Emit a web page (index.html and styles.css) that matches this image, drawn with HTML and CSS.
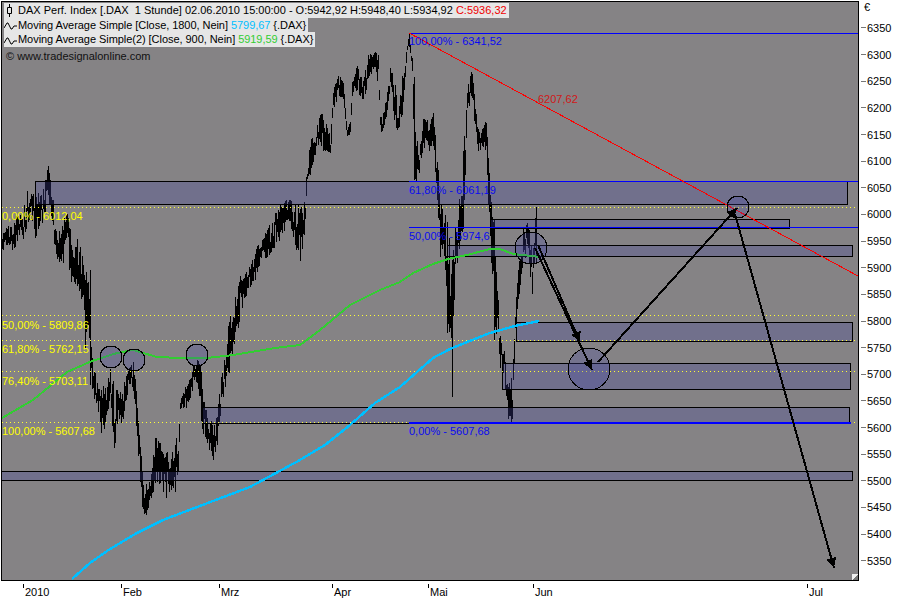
FILE: index.html
```html
<!DOCTYPE html>
<html lang="en">
<head>
    <meta charset="UTF-8">
    <meta name="viewport" content="width=device-width, initial-scale=1.0">
    <title>DAX Perf. Index</title>
    <link rel="stylesheet" href="styles.css">
</head>
<body>
    <div class="chart-window">
        <div class="chart-row">
            <div class="plot">
                <!-- viewBox uses page pixels so drawings can be read straight off the chart -->
                <svg class="canvas" viewBox="2 2 856 578" width="856" height="578">
                    <defs>
                        <marker id="arrowHead" markerUnits="userSpaceOnUse" markerWidth="12" markerHeight="12" refX="10" refY="5" orient="auto">
                            <polygon points="0,0 10,5 0,10" fill="#000"></polygon>
                        </marker>
                    </defs>

                    <path id="priceBars" class="price"></path>

                    <!-- support / resistance zones -->
                    <rect class="zone" x="35.5" y="181.5" width="812" height="23"></rect>
                    <rect class="zone" x="490.5" y="219.5" width="299" height="9"></rect>
                    <rect class="zone" x="447.5" y="245.5" width="405" height="11"></rect>
                    <rect class="zone" x="516.5" y="322.5" width="336" height="19"></rect>
                    <rect class="zone" x="502.5" y="363.5" width="348" height="26"></rect>
                    <rect class="zone" x="202.5" y="407.5" width="647" height="16"></rect>
                    <rect class="zone" x="1.5" y="471.5" width="851" height="9"></rect>

                    <!-- fibonacci retracement, yellow set -->
                    <line class="fib-dots" x1="2" y1="207.5" x2="858" y2="207.5"></line>
                    <line class="fib-dots" x1="2" y1="315.5" x2="858" y2="315.5"></line>
                    <line class="fib-dots" x1="2" y1="340.5" x2="858" y2="340.5"></line>
                    <line class="fib-dots" x1="2" y1="371.5" x2="858" y2="371.5"></line>
                    <line class="fib-dots" x1="2" y1="422.5" x2="858" y2="422.5"></line>

                    <!-- fibonacci retracement, blue set -->
                    <line class="fib-line" x1="409" y1="33.5" x2="858" y2="33.5"></line>
                    <line class="fib-line" x1="409" y1="181.5" x2="858" y2="181.5"></line>
                    <line class="fib-line" x1="409" y1="227.5" x2="858" y2="227.5"></line>
                    <line class="fib-line fib-base" x1="409" y1="423" x2="851" y2="423"></line>

                    <line class="trend" x1="409" y1="33" x2="858" y2="276"></line>

                    <polyline class="ma ma-slow" points="72,579 90,563 110,549 137,533 163,520 213,501 250,487 300,460 325,445 350,425 375,403 400,387 417,372 433,358 450,349 467,342 490,333 515,326 539,321"></polyline>
                    <polyline class="ma ma-fast" points="2,418 33,400 50,386 67,372 92,361 117,353 133,350 157,357 180,358 207,358 233,355 275,348 300,345 320,330 350,305 380,290 400,282 413,273 433,264 448,259 467,255 490,249 500,249 513,254 540,257"></polyline>

                    <circle class="mark" cx="111" cy="357" r="11"></circle>
                    <circle class="mark" cx="134" cy="360" r="11"></circle>
                    <circle class="mark" cx="197" cy="355" r="11"></circle>
                    <circle class="mark" cx="531" cy="248" r="16"></circle>
                    <circle class="mark" cx="589" cy="369" r="21"></circle>
                    <circle class="mark" cx="738" cy="207" r="11"></circle>

                    <line class="arrow" x1="538" y1="245" x2="580" y2="342"></line>
                    <line class="arrow" x1="535" y1="248" x2="592" y2="370"></line>
                    <line class="arrow" x1="598" y1="362" x2="737" y2="208"></line>
                    <line class="arrow" x1="735" y1="214" x2="834" y2="568"></line>

                    <text class="label label-blue" x="409" y="45">100,00% - 6341,52</text>
                    <text class="label label-blue" x="409" y="194">61,80% - 6061,19</text>
                    <text class="label label-blue" x="409" y="240">50,00% - 5974,6</text>
                    <text class="label label-blue" x="409" y="435">0,00% - 5607,68</text>
                    <text class="label label-yellow" x="2" y="220">0,00% - 6012,04</text>
                    <text class="label label-yellow" x="2" y="329">50,00% - 5809,86</text>
                    <text class="label label-yellow" x="2" y="353">61,80% - 5762,15</text>
                    <text class="label label-yellow" x="2" y="385">76,40% - 5703,11</text>
                    <text class="label label-yellow" x="2" y="435">100,00% - 5607,68</text>
                    <text class="label label-red" x="538" y="103">6207,62</text>

                    <!-- resize grip -->
                    <polygon class="grip" points="852,580 858,574 858,580"></polygon>
                    <polygon class="grip-back" points="852,574 858,574 852,580"></polygon>
                </svg>

                <div class="legend">
                    <div class="legend-row">
                        <svg class="legend-icon" viewBox="0 0 13 13" width="13" height="13">
                            <path d="M5.5 0v3M5.5 10v3M3.5 3.5h4v6h-4z" fill="none" stroke="#000"></path>
                        </svg>
                        <span>DAX Perf. Index [.DAX&nbsp; 1 Stunde] 02.06.2010 15:00:00 - O:5942,92 H:5948,40 L:5934,92 <em class="val-red">C:5936,32</em></span>
                    </div>
                    <div class="legend-row legend-ma">
                        <svg class="legend-icon" viewBox="0 0 13 13" width="13" height="13">
                            <path d="M0 10 3 5h1l3 6h1l2-3h3" fill="none" stroke="#000"></path>
                        </svg>
                        <span>Moving Average Simple [Close, 1800, Nein] <em class="val-cyan">5799,67</em> {.DAX}</span>
                    </div>
                    <div class="legend-row legend-ma">
                        <svg class="legend-icon" viewBox="0 0 13 13" width="13" height="13">
                            <path d="M0 10 3 5h1l3 6h1l2-3h3" fill="none" stroke="#000"></path>
                        </svg>
                        <span>Moving Average Simple(2) [Close, 900, Nein] <em class="val-green">5919,59</em> {.DAX}</span>
                    </div>
                    <div class="legend-source">© www.tradesignalonline.com</div>
                </div>
            </div>

            <div class="price-axis">
                <div class="currency">€</div>
                <div class="price-tick">6350</div>
                <div class="price-tick">6300</div>
                <div class="price-tick">6250</div>
                <div class="price-tick">6200</div>
                <div class="price-tick">6150</div>
                <div class="price-tick">6100</div>
                <div class="price-tick">6050</div>
                <div class="price-tick">6000</div>
                <div class="price-tick">5950</div>
                <div class="price-tick">5900</div>
                <div class="price-tick">5850</div>
                <div class="price-tick">5800</div>
                <div class="price-tick">5750</div>
                <div class="price-tick">5700</div>
                <div class="price-tick">5650</div>
                <div class="price-tick">5600</div>
                <div class="price-tick">5550</div>
                <div class="price-tick">5500</div>
                <div class="price-tick">5450</div>
                <div class="price-tick">5400</div>
                <div class="price-tick">5350</div>
            </div>
        </div>

        <div class="time-axis">
            <div class="month" style="width: 98px">2010</div>
            <div class="month" style="width: 98px">Feb</div>
            <div class="month" style="width: 113px">Mrz</div>
            <div class="month" style="width: 96px">Apr</div>
            <div class="month" style="width: 105px">Mai</div>
            <div class="month" style="width: 274px">Jun</div>
            <div class="month" style="width: 40px">Jul</div>
        </div>
    </div>

    <script src="chart.js"></script>
</body>
</html>
```

FILE: styles.css
```css
body {
    margin: 0;
    background: #fff;
    color: #000;
    font-family: 'Liberation Sans', Arial, sans-serif;
    font-size: 11px;
    overflow: hidden;
}

.chart-window {
    width: 900px;
    height: 600px;
    padding: 1px 0 0 1px;
    box-sizing: border-box;
}

.chart-row {
    display: flex;
}

.plot {
    position: relative;
    width: 858px;
    height: 580px;
    box-sizing: border-box;
    border: 1px solid #000;
    background: #858385;
}

.canvas {
    display: block;
    shape-rendering: crispEdges;
}

.price {
    fill: none;
    stroke: #000;
    stroke-width: 1;
}

.zone {
    fill: rgba(70, 70, 160, 0.3);
    stroke: #000;
    stroke-width: 1;
}

.fib-dots {
    stroke: #ffff33;
    stroke-width: 1;
    stroke-dasharray: 1 3;
    shape-rendering: geometricPrecision;
}

.fib-line {
    stroke: #00f;
    stroke-width: 1;
}

.fib-base {
    stroke-width: 2;
}

.trend {
    stroke: #f00;
    stroke-width: 1;
}

.ma {
    fill: none;
}

.ma-slow {
    stroke: #00bfff;
    stroke-width: 2.4;
}

.ma-fast {
    stroke: #32cd32;
    stroke-width: 2;
}

.mark {
    fill: rgba(70, 70, 170, 0.26);
    stroke: #000;
    stroke-width: 1;
}

.arrow {
    stroke: #000;
    stroke-width: 2;
    marker-end: url(#arrowHead);
}

.label {
    font-size: 11px;
    shape-rendering: auto;
}

.label-blue {
    fill: #0a0af0;
}

.label-yellow {
    fill: #ffff00;
}

.label-red {
    fill: #d01818;
}

.grip {
    fill: #777;
}

.grip-back {
    fill: #eee;
}

/* legend sits on top of the plot */
.legend {
    position: absolute;
    top: 1px;
    left: 2px;
}

.legend-row {
    display: flex;
    align-items: center;
    width: max-content;
    height: 14.5px;
    padding-right: 2px;
    background: #e6e6e6;
    white-space: nowrap;
}

.legend-ma {
    letter-spacing: -0.05px;
}

.legend-icon {
    flex: none;
    margin-right: 1px;
}

.legend-row em {
    font-style: normal;
}

.val-red {
    color: #f00000;
}

.val-cyan {
    color: #00bfff;
}

.val-green {
    color: #32cd32;
}

.legend-source {
    margin-top: 3px;
    margin-left: 2px;
    color: #111;
}

.price-axis {
    width: 41px;
}

.currency {
    height: 13.65px;
    padding-left: 5px;
    line-height: 13px;
}

.price-tick {
    display: flex;
    align-items: center;
    gap: 1px;
    height: 26.65px;
    padding-left: 2px;
}

.price-tick::before {
    content: "";
    width: 5px;
    height: 1px;
    background: #777;
}

.time-axis {
    display: flex;
    padding-left: 22px;
}

.month {
    position: relative;
    box-sizing: border-box;
    padding: 4px 0 0 2px;
    line-height: 14px;
}

.month::before {
    content: "";
    position: absolute;
    top: 3px;
    left: 0;
    width: 1px;
    height: 4px;
    background: #000;
}
```

FILE: chart.js
```js
// Hourly price trace: high/low bars scattered inside hand-read band points
document.addEventListener('DOMContentLoaded', function () {
  // [x, high y, low y] in page pixels
  const envelope = [
    [2, 232, 252], [6, 222, 246], [10, 226, 250], [14, 220, 250], [18, 210, 245],
    [22, 215, 248], [27, 190, 225], [31, 186, 215], [35, 195, 240], [38, 190, 230],
    [42, 195, 235], [46, 170, 205], [48, 163, 200], [52, 185, 225], [55, 220, 260],
    [58, 232, 265], [62, 225, 270], [66, 207, 240], [70, 225, 285], [74, 245, 290],
    [78, 230, 285], [82, 255, 320], [85, 275, 365], [88, 265, 340], [91, 330, 385],
    [93, 370, 400], [97, 375, 405], [102, 385, 440], [106, 385, 420], [110, 365, 400],
    [114, 385, 455], [118, 390, 420], [122, 385, 425], [127, 370, 400], [130, 365, 385],
    [134, 360, 400], [137, 405, 450], [140, 440, 490], [143, 480, 515], [147, 480, 515],
    [151, 470, 500], [155, 435, 490], [160, 440, 490], [165, 445, 500], [170, 460, 490],
    [175, 437, 495], [178, 437, 480], [180, 395, 410], [185, 385, 410], [190, 375, 400],
    [194, 362, 385], [198, 355, 390], [201, 370, 425], [204, 400, 440], [208, 415, 445],
    [213, 420, 470], [217, 410, 445], [220, 385, 420], [223, 360, 400], [226, 340, 385],
    [230, 310, 375], [234, 300, 350], [240, 275, 320], [245, 270, 300], [250, 265, 290],
    [255, 250, 280], [262, 235, 262], [270, 220, 255], [280, 205, 240], [288, 195, 222],
    [295, 200, 250], [300, 205, 265], [304, 200, 240], [307, 165, 180], [310, 140, 175],
    [317, 123, 147], [322, 107, 150], [330, 133, 157], [333, 90, 120], [337, 73, 105],
    [343, 80, 100], [347, 127, 140], [350, 120, 135], [352, 80, 98], [357, 63, 90],
    [363, 80, 107], [368, 52, 80], [375, 50, 67], [378, 53, 90], [380, 117, 137],
    [385, 103, 123], [390, 67, 93], [395, 80, 127], [398, 117, 137], [402, 63, 117],
    [407, 43, 53], [409, 32, 47], [412, 53, 73], [413, 77, 130], [415, 130, 183],
    [418, 143, 180], [425, 105, 143], [428, 127, 160], [433, 110, 153], [437, 153, 200],
    [440, 190, 260], [443, 210, 250], [448, 215, 333], [452, 260, 340], [457, 205, 265],
    [463, 145, 260], [467, 87, 110], [472, 68, 100], [475, 103, 133], [480, 133, 163],
    [486, 118, 153], [489, 170, 230], [494, 220, 340], [498, 290, 340], [500, 330, 370],
    [504, 350, 378], [508, 383, 422], [512, 378, 422], [515, 313, 343], [518, 265, 303],
    [523, 223, 263], [528, 220, 257], [532, 250, 303], [535, 208, 253], [537, 257, 287]
  ];

  // Long single wicks that the bars would not reach
  const wicks = [[90, 270, 385], [452, 260, 397], [447, 250, 333], [536, 207, 250], [511, 378, 422], [414, 77, 180], [494, 220, 340]];

  // Small seeded generator so the trace stays the same on every load
  let seed = 20100602;
  function random() {
    seed = (seed * 16807) % 2147483647;
    return seed / 2147483647;
  }

  let d = '';
  for (let i = 0; i < envelope.length - 1; i++) {
    const [x0, hi0, lo0] = envelope[i];
    const [x1, hi1, lo1] = envelope[i + 1];
    for (let x = x0; x < x1; x++) {
      const t = (x - x0) / (x1 - x0);
      const high = hi0 + (hi1 - hi0) * t;
      const low = lo0 + (lo1 - lo0) * t;
      // each bar covers part of the band, so the trace stays broken and spiky
      const length = (low - high) * (0.3 + random() * 0.6);
      const top = high + (low - high - length) * random();
      d += 'M' + (x + 0.5) + ' ' + top.toFixed(1) + 'V' + (top + length).toFixed(1);
    }
  }

  wicks.forEach(wick => {
    d += 'M' + (wick[0] + 0.5) + ' ' + wick[1] + 'V' + wick[2];
  });

  document.getElementById('priceBars').setAttribute('d', d);
});
```
